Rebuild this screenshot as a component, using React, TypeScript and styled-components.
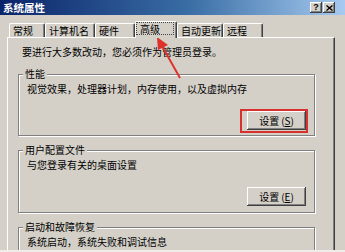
import React from "react";
import styled, { createGlobalStyle } from "styled-components";

const Global = createGlobalStyle`
  html, body { margin: 0; padding: 0; background: #d4d0c8; }
  body { font-family: "Noto Sans CJK SC", "Noto Sans", sans-serif; }
  * { box-sizing: border-box; }
`;

const Window = styled.div`
  position: relative;
  width: 345px;
  height: 252px;
  overflow: hidden;
  background: #d4d0c8;
  display: flex;
  flex-direction: column;
  font-family: "Noto Sans CJK SC", "Noto Sans", sans-serif;
  font-size: 10px;
  color: #000;
`;

const TitleBar = styled.div`
  flex: none;
  height: 15px;
  display: flex;
  align-items: center;
  justify-content: space-between;
  padding: 0 10px 0 3px;
  background: linear-gradient(to right, #0a246a 0%, #3a6ea5 55%, #a6caf0 100%);
`;

const Title = styled.span`
  color: #fff;
  font-weight: 700;
  font-size: 10.5px;
  line-height: 15px;
`;

const CaptionButtons = styled.div`
  display: flex;
  gap: 1px;
`;

const CaptionButton = styled.div`
  width: 12px;
  height: 11px;
  display: flex;
  align-items: center;
  justify-content: center;
  background: #d4d0c8;
  box-shadow: inset -1px -1px #404040, inset 1px 1px #fff, inset -2px -2px #808080;
  font: 700 9px/1 "Liberation Sans", Arial, sans-serif;
  color: #000;
`;

const TabStrip = styled.div`
  flex: none;
  display: flex;
  align-items: flex-end;
  height: 16px;
  margin-top: 6px;
  padding-left: 9px;
  position: relative;
  z-index: 1;
`;

const Tab = styled.div<{ $w: number; $active?: boolean }>`
  width: ${(p) => p.$w}px;
  height: ${(p) => (p.$active ? 17 : 14)}px;
  margin-bottom: ${(p) => (p.$active ? -1 : 0)}px;
  background: #d4d0c8;
  border-top: 1px solid #fff;
  border-left: 1px solid #fff;
  border-right: 1px solid #404040;
  border-radius: 2px 2px 0 0;
  box-shadow: inset -1px 0 #808080;
  padding: ${(p) => (p.$active ? "0 2px 0 0" : "0 0 0 3px")};
  line-height: 13px;
  font-size: 10px;
  white-space: nowrap;
`;

const FocusRing = styled.span`
  display: block;
  height: 13px;
  border: 1px dotted #444;
  padding-left: 3px;
  line-height: 11px;
`;

const Panel = styled.div`
  flex: 1;
  min-height: 0;
  margin-left: 7px;
  width: 328px;
  border-top: 1px solid #fff;
  border-left: 1px solid #fff;
  border-right: 1px solid #404040;
  box-shadow: inset -1px 0 #808080;
  padding: 7px 0 0 10px;
  display: flex;
  flex-direction: column;
  overflow: hidden;
`;

const Intro = styled.div`
  padding-left: 4px;
  line-height: 14px;
`;

const Group = styled.div<{ $top: number; $h: number }>`
  flex: none;
  width: 297px;
  height: ${(p) => p.$h}px;
  margin-top: ${(p) => p.$top}px;
  border: 1px solid #808080;
  box-shadow: 1px 1px #fff, inset 1px 1px #fff;
  padding: 0 8px;
  display: flex;
  flex-direction: column;
`;

const Legend = styled.div`
  align-self: flex-start;
  margin: -8px 0 0 -4px;
  padding: 0 2px;
  background: #d4d0c8;
  line-height: 13px;
`;

const GroupText = styled.div`
  margin-top: 2px;
  line-height: 14px;
`;

const Button = styled.button`
  width: 59px;
  height: 19px;
  padding: 0;
  border: none;
  background: #d4d0c8;
  box-shadow: inset -1px -1px #404040, inset 1px 1px #fff, inset -2px -2px #808080;
  font-family: "Noto Sans CJK SC", "Noto Sans", sans-serif;
  font-size: 10px;
  color: #000;
  line-height: 17px;
`;

const Mnemonic = styled.span`
  margin-left: 2px;
`;

const ButtonSlot = styled.div`
  align-self: flex-end;
  margin-top: 15px;
  display: flex;
`;

const Highlight = styled.div`
  align-self: flex-end;
  margin: 13px -2px 0 0;
  padding: 0 0 1px 5px;
  border: 2px solid #d8322e;
  display: flex;
`;

const BottomEdge = styled.div`
  flex: none;
  height: 2px;
  background: #eeede9;
`;

const ArrowLayer = styled.svg`
  position: absolute;
  left: 0;
  top: 0;
  pointer-events: none;
`;

const tabs = [
  { label: "常规", w: 36 },
  { label: "计算机名", w: 50 },
  { label: "硬件", w: 40 },
  { label: "高级", w: 42, active: true },
  { label: "自动更新", w: 46 },
  { label: "远程", w: 40 },
];

export default function App() {
  return (
    <>
      <Global />
      <Window>
        <TitleBar>
          <Title>系统属性</Title>
          <CaptionButtons>
            <CaptionButton>?</CaptionButton>
            <CaptionButton>
              <svg width="7" height="6" viewBox="0 0 7 6">
                <path d="M0.5 0.5 L6.5 5.5 M6.5 0.5 L0.5 5.5" stroke="#000" strokeWidth="1.4" />
              </svg>
            </CaptionButton>
          </CaptionButtons>
        </TitleBar>
        <TabStrip>
          {tabs.map((t) => (
            <Tab key={t.label} $w={t.w} $active={t.active}>
              {t.active ? <FocusRing>{t.label}</FocusRing> : t.label}
            </Tab>
          ))}
        </TabStrip>
        <Panel>
          <Intro>要进行大多数改动，您必须作为管理员登录。</Intro>
          <Group $top={15} $h={62}>
            <Legend>性能</Legend>
            <GroupText>视觉效果，处理器计划，内存使用，以及虚拟内存</GroupText>
            <Highlight>
              <Button>
                设置<Mnemonic>(<u>S</u>)</Mnemonic>
              </Button>
            </Highlight>
          </Group>
          <Group $top={14} $h={63}>
            <Legend>用户配置文件</Legend>
            <GroupText>与您登录有关的桌面设置</GroupText>
            <ButtonSlot>
              <Button>
                设置<Mnemonic>(<u>E</u>)</Mnemonic>
              </Button>
            </ButtonSlot>
          </Group>
          <Group $top={14} $h={60}>
            <Legend>启动和故障恢复</Legend>
            <GroupText>系统启动，系统失败和调试信息</GroupText>
          </Group>
        </Panel>
        <BottomEdge />
        <ArrowLayer width="345" height="252" viewBox="0 0 345 252">
          <line x1="180" y1="78" x2="162" y2="46" stroke="#e0302a" strokeWidth="2" />
          <polygon points="157,37 168,45 158,50" fill="#e0302a" />
        </ArrowLayer>
      </Window>
    </>
  );
}
